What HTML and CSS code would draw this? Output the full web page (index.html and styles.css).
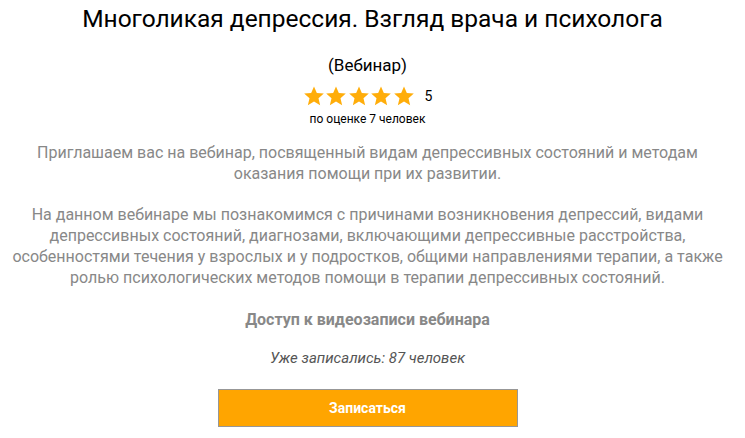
FILE: index.html
```
<!DOCTYPE html>
<html lang="ru">
<head>
    <meta charset="UTF-8">
    <meta name="viewport" content="width=device-width, initial-scale=1.0">
    <title>Многоликая депрессия</title>
    <link rel="stylesheet" href="styles.css">
</head>
<body>
<div class="webinar">
    <h1>Многоликая депрессия. Взгляд врача и психолога</h1>

    <div class="content">
        <div class="type">(Вебинар)</div>

        <!-- Rating -->
        <div class="rating">
            <div class="stars">
                <svg viewBox="0 0 24 24"><path d="M12 1.5l3.1 7.1 7.6.7-5.8 5.1 1.8 7.6L12 18l-6.7 4 1.8-7.6-5.8-5.1 7.6-.7z"/></svg>
                <svg viewBox="0 0 24 24"><path d="M12 1.5l3.1 7.1 7.6.7-5.8 5.1 1.8 7.6L12 18l-6.7 4 1.8-7.6-5.8-5.1 7.6-.7z"/></svg>
                <svg viewBox="0 0 24 24"><path d="M12 1.5l3.1 7.1 7.6.7-5.8 5.1 1.8 7.6L12 18l-6.7 4 1.8-7.6-5.8-5.1 7.6-.7z"/></svg>
                <svg viewBox="0 0 24 24"><path d="M12 1.5l3.1 7.1 7.6.7-5.8 5.1 1.8 7.6L12 18l-6.7 4 1.8-7.6-5.8-5.1 7.6-.7z"/></svg>
                <svg viewBox="0 0 24 24"><path d="M12 1.5l3.1 7.1 7.6.7-5.8 5.1 1.8 7.6L12 18l-6.7 4 1.8-7.6-5.8-5.1 7.6-.7z"/></svg>
            </div>
            <span class="score">5</span>
        </div>
        <div class="votes">по оценке 7 человек</div>

        <!-- Description -->
        <div class="description">
            <p>Приглашаем вас на вебинар, посвященный видам депрессивных состояний и методам оказания помощи при их развитии.</p>
            <p>На данном вебинаре мы познакомимся с причинами возникновения депрессий, видами депрессивных состояний, диагнозами, включающими депрессивные расстройства, особенностями течения у взрослых и у подростков, общими направлениями терапии, а также ролью психологических методов помощи в терапии депрессивных состояний.</p>
        </div>

        <div class="access">Доступ к видеозаписи вебинара</div>
        <div class="signed">Уже записались: 87 человек</div>

        <button class="signup-btn">Записаться</button>
    </div>
</div>
</body>
</html>
```

FILE: styles.css
```
body {
    font-family: Roboto, "Liberation Sans", sans-serif;
    margin: 0;
    padding: 0;
    background-color: #fff;
}
.webinar {
    text-align: center;
    padding: 4px 10px 0;
}
h1 {
    font-size: 24.5px;
    font-weight: normal;
    color: #000;
    margin: 0;
    line-height: 30px;
}
.content {
    padding-right: 10px;
}
.type {
    font-size: 17px;
    color: #000;
    margin-top: 21px;
    line-height: 20px;
}
.rating {
    display: flex;
    justify-content: center;
    align-items: center;
    margin-top: 10px;
}
.stars {
    display: flex;
    gap: 0.5px;
}
.stars svg {
    width: 22px;
    height: 22px;
    fill: #ffad0a;
}
.score {
    font-size: 14px;
    color: #000;
    margin-left: 10px;
}
.votes {
    font-size: 12px;
    color: #000;
    margin-top: 5px;
}
.description {
    margin-top: 16px;
    color: #888;
    font-size: 16px;
    line-height: 21px;
}
.description p {
    margin: 0 0 20px;
}
.description p:last-child {
    margin-bottom: 0;
}
.access {
    font-size: 16px;
    font-weight: bold;
    color: #888;
    line-height: 20px;
    margin-top: 22px;
}
.signed {
    font-size: 15px;
    font-style: italic;
    color: #555;
    line-height: 20px;
    margin-top: 18px;
}
button.signup-btn {
    display: block;
    margin: 21px auto 0;
    width: 300px;
    height: 38px;
    background-color: #ffa500;
    border: 1px solid #979797;
    color: #fff;
    font-family: Roboto, "Liberation Sans", sans-serif;
    font-size: 14px;
    font-weight: bold;
    cursor: pointer;
}
```
